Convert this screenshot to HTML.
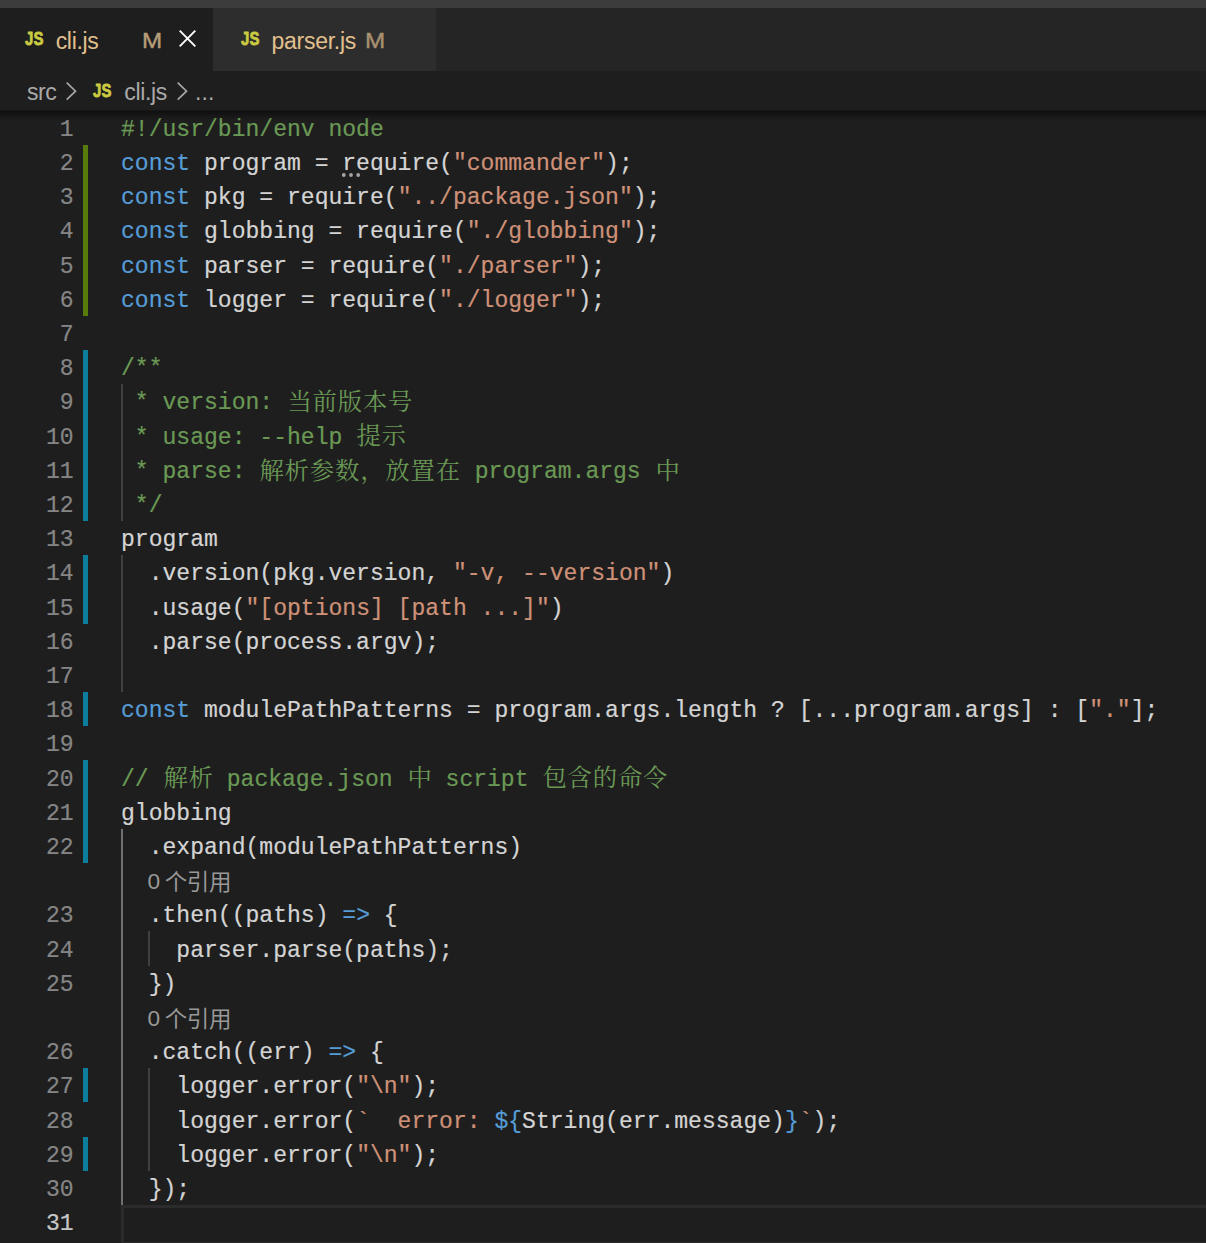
<!DOCTYPE html>
<html lang="zh"><head><meta charset="utf-8"><title>cli.js - Visual Studio Code</title>
<style>
*{box-sizing:border-box}
html,body{margin:0;padding:0}
html{overflow:hidden;background:#1e1e1e}
body{width:1206px;height:1243px;overflow:hidden;background:#1e1e1e;position:relative;
 font-family:"Liberation Sans",sans-serif;color:#d4d4d4}
#top{position:absolute;left:0;top:0;width:1206px;height:8px;background:#3c3c3c}
#tabs{position:absolute;left:0;top:8px;width:1206px;height:63px;background:#252526}
.tab{position:absolute;top:0;height:63px}
#t1{left:0;width:213.3px;background:#1e1e1e}
#t2{left:213.3px;width:222.7px;background:#2d2d2d}
.ui{position:absolute;white-space:pre;font-size:23px;line-height:26px;letter-spacing:-0.25px}
.m{font-size:22px;letter-spacing:0;-webkit-text-stroke:0.45px;transform-origin:0 50%;transform:scaleX(1.10)}
.mod{color:#e2c08d}
.bc{color:#a9a9a9}
.js{position:absolute}
#crumbs{position:absolute;left:0;top:71px;width:1206px;height:39.6px;background:#1e1e1e}
#shadow{position:absolute;left:0;top:110px;width:1206px;height:11px;
 background:linear-gradient(rgba(0,0,0,.1) 0,rgba(0,0,0,.46) 10%,rgba(0,0,0,.44) 19%,rgba(0,0,0,.3) 40%,rgba(0,0,0,.14) 68%,rgba(0,0,0,0) 100%);z-index:3}
#ed{position:absolute;left:0;top:0;width:1206px;height:1243px;overflow:hidden}
.ln{position:absolute;left:0;width:1206px;height:34.2px;line-height:34.2px;
 font-family:"Liberation Mono",monospace;font-size:23.05px;white-space:pre;-webkit-text-stroke:0.2px}
.no{position:absolute;right:1132.4px;top:2.2px;color:#858585}
.cur .no{color:#c6c6c6}
.code{position:absolute;left:121.0px;top:2.2px;height:34.2px}
.cur:before{content:"";position:absolute;left:121px;right:-4px;top:0.2px;height:33.8px;
 border:3.1px solid #2b2b2b}
.ga,.gm{position:absolute;left:83px;top:0;width:5.2px;height:34.2px}
.ga{background:#587c0c} .gm{background:#0c7d9d}
.gd{position:absolute;width:2px}
.cj{display:inline-block;position:relative;height:34.2px;vertical-align:top;top:-2.2px}
.cj svg{position:absolute;left:0;top:0;overflow:visible}
.cj text{-webkit-text-stroke:0;white-space:pre}
.cj .cm{font-family:"Liberation Mono","Noto Serif CJK SC",serif;font-size:24.44px;letter-spacing:0.76px}
.cj .cs{font-family:"Liberation Sans","Noto Sans CJK SC",sans-serif;font-size:22.5px;letter-spacing:-0.35px}
.lc{left:147.6px;top:0.85px;color:#999999;font-family:"Liberation Sans",sans-serif;font-size:22.7px;-webkit-text-stroke:0}
.lz{display:inline-block;width:17.2px}
.lc .cj{top:-0.85px}
</style></head>
<body>
<div id="top"></div>
<div id="tabs">
 <div class="tab" id="t1"><svg class="js" style="left:23.5px;top:22.0px" width="22" height="18" viewBox="-1 -2 22 18"><text transform="translate(0.1 13.45) scale(0.835 1)" font-family="Liberation Sans" font-weight="bold" font-size="17.9" fill="#cbcb41" stroke="#cbcb41" stroke-width="0.75" stroke-linejoin="round">JS</text></svg><span class="ui mod" style="left:55.7px;top:19.5px;letter-spacing:-0.33px">cli.js</span><span class="ui m" style="left:142.4px;top:19.8px;color:#b69d79">M</span><svg class="js" style="left:179.1px;top:22.0px" width="17" height="17" viewBox="0 0 17 17"><path d="M0.7 0.7 L16.3 16.3 M16.3 0.7 L0.7 16.3" fill="none" stroke="#ffffff" stroke-width="1.9"/></svg></div>
 <div class="tab" id="t2"><svg class="js" style="left:26.5px;top:22.0px" width="22" height="18" viewBox="-1 -2 22 18"><text transform="translate(0.1 13.45) scale(0.835 1)" font-family="Liberation Sans" font-weight="bold" font-size="17.9" fill="#cbcb41" stroke="#cbcb41" stroke-width="0.75" stroke-linejoin="round">JS</text></svg><span class="ui mod" style="left:58.1px;top:19.5px">parser.js</span><span class="ui m" style="left:151.9px;top:19.8px;color:#a8916f">M</span></div>
</div>
<div id="crumbs"><span class="ui bc" style="left:27px;top:7.9px;letter-spacing:-0.5px">src</span><svg class="js" style="left:65.9px;top:10.5px" width="12" height="19" viewBox="0 0 12 19"><path d="M0.7 0.7 L9.5 9.15 L0.7 17.6" fill="none" stroke="#a6a6a6" stroke-width="1.7"/></svg><svg class="js" style="left:92.0px;top:10.6px" width="22" height="18" viewBox="-1 -2 22 18"><text transform="translate(0.1 13.45) scale(0.835 1)" font-family="Liberation Sans" font-weight="bold" font-size="17.9" fill="#cbcb41" stroke="#cbcb41" stroke-width="0.75" stroke-linejoin="round">JS</text></svg><span class="ui bc" style="left:124.3px;top:7.9px;letter-spacing:-0.35px">cli.js</span><svg class="js" style="left:176.9px;top:10.5px" width="12" height="19" viewBox="0 0 12 19"><path d="M0.7 0.7 L9.5 9.15 L0.7 17.6" fill="none" stroke="#a6a6a6" stroke-width="1.7"/></svg><span class="ui bc" style="left:195px;top:7.9px;letter-spacing:0.1px">...</span></div>
<div id="ed">
<i class="gd" style="left:121px;top:384.20px;height:136.80px;background:#404040"></i><i class="gd" style="left:121px;top:555.20px;height:136.80px;background:#404040"></i><i class="gd" style="left:121px;top:828.80px;height:376.20px;background:#707070"></i><i class="gd" style="left:148px;top:931.40px;height:34.20px;background:#404040"></i><i class="gd" style="left:148px;top:1068.20px;height:102.60px;background:#404040"></i>
<div class="ln" style="top:110.60px"><span class="no">1</span><span class="code"><span style="color:#6a9955">#!/usr/bin/env node</span></span></div>
<div class="ln" style="top:144.80px"><b class="ga"></b><span class="no">2</span><span class="code"><span style="color:#569cd6">const</span> program = require(<span style="color:#ce9178">"commander"</span>);</span></div>
<div class="ln" style="top:179.00px"><b class="ga"></b><span class="no">3</span><span class="code"><span style="color:#569cd6">const</span> pkg = require(<span style="color:#ce9178">"../package.json"</span>);</span></div>
<div class="ln" style="top:213.20px"><b class="ga"></b><span class="no">4</span><span class="code"><span style="color:#569cd6">const</span> globbing = require(<span style="color:#ce9178">"./globbing"</span>);</span></div>
<div class="ln" style="top:247.40px"><b class="ga"></b><span class="no">5</span><span class="code"><span style="color:#569cd6">const</span> parser = require(<span style="color:#ce9178">"./parser"</span>);</span></div>
<div class="ln" style="top:281.60px"><b class="ga"></b><span class="no">6</span><span class="code"><span style="color:#569cd6">const</span> logger = require(<span style="color:#ce9178">"./logger"</span>);</span></div>
<div class="ln" style="top:315.80px"><span class="no">7</span><span class="code"></span></div>
<div class="ln" style="top:350.00px"><b class="gm"></b><span class="no">8</span><span class="code"><span style="color:#6a9955">/**</span></span></div>
<div class="ln" style="top:384.20px"><b class="gm"></b><span class="no">9</span><span class="code"><span style="color:#6a9955"> * version: </span><span class="cj" style="width:126.00px"><svg width="126.00" height="34.2" viewBox="0 -25.90 126.00 34.2" fill="#6a9955"><text class="cm" x="0.38" y="-0.29">当前版本号</text></svg></span></span></div>
<div class="ln" style="top:418.40px"><b class="gm"></b><span class="no">10</span><span class="code"><span style="color:#6a9955"> * usage: --help </span><span class="cj" style="width:50.40px"><svg width="50.40" height="34.2" viewBox="0 -25.90 50.40 34.2" fill="#6a9955"><text class="cm" x="0.38" y="-0.29">提示</text></svg></span></span></div>
<div class="ln" style="top:452.60px"><b class="gm"></b><span class="no">11</span><span class="code"><span style="color:#6a9955"> * parse: </span><span class="cj" style="width:201.60px"><svg width="201.60" height="34.2" viewBox="0 -25.90 201.60 34.2" fill="#6a9955"><text class="cm" x="0.38" y="-0.29">解析参数，放置在</text></svg></span><span style="color:#6a9955"> program.args </span><span class="cj" style="width:25.20px"><svg width="25.20" height="34.2" viewBox="0 -25.90 25.20 34.2" fill="#6a9955"><text class="cm" x="0.38" y="-0.29">中</text></svg></span></span></div>
<div class="ln" style="top:486.80px"><b class="gm"></b><span class="no">12</span><span class="code"><span style="color:#6a9955"> */</span></span></div>
<div class="ln" style="top:521.00px"><span class="no">13</span><span class="code">program</span></div>
<div class="ln" style="top:555.20px"><b class="gm"></b><span class="no">14</span><span class="code">  .version(pkg.version, <span style="color:#ce9178">"-v, --version"</span>)</span></div>
<div class="ln" style="top:589.40px"><b class="gm"></b><span class="no">15</span><span class="code">  .usage(<span style="color:#ce9178">"[options] [path ...]"</span>)</span></div>
<div class="ln" style="top:623.60px"><span class="no">16</span><span class="code">  .parse(process.argv);</span></div>
<div class="ln" style="top:657.80px"><span class="no">17</span><span class="code"></span></div>
<div class="ln" style="top:692.00px"><b class="gm"></b><span class="no">18</span><span class="code"><span style="color:#569cd6">const</span> modulePathPatterns = program.args.length ? [...program.args] : [<span style="color:#ce9178">"."</span>];</span></div>
<div class="ln" style="top:726.20px"><span class="no">19</span><span class="code"></span></div>
<div class="ln" style="top:760.40px"><b class="gm"></b><span class="no">20</span><span class="code"><span style="color:#6a9955">// </span><span class="cj" style="width:50.40px"><svg width="50.40" height="34.2" viewBox="0 -25.90 50.40 34.2" fill="#6a9955"><text class="cm" x="0.38" y="-0.29">解析</text></svg></span><span style="color:#6a9955"> package.json </span><span class="cj" style="width:25.20px"><svg width="25.20" height="34.2" viewBox="0 -25.90 25.20 34.2" fill="#6a9955"><text class="cm" x="0.38" y="-0.29">中</text></svg></span><span style="color:#6a9955"> script </span><span class="cj" style="width:126.00px"><svg width="126.00" height="34.2" viewBox="0 -25.90 126.00 34.2" fill="#6a9955"><text class="cm" x="0.38" y="-0.29">包含的命令</text></svg></span></span></div>
<div class="ln" style="top:794.60px"><b class="gm"></b><span class="no">21</span><span class="code">globbing</span></div>
<div class="ln" style="top:828.80px"><b class="gm"></b><span class="no">22</span><span class="code">  .expand(modulePathPatterns)</span></div>
<div class="ln lens" style="top:863.00px"><span class="code lc"><span class="lz">0</span><span class="cj" style="width:66.45px"><svg width="66.45" height="34.2" viewBox="0 -27.30 66.45 34.2" fill="#999999"><text class="cs" x="-0.30" y="0">个引用</text></svg></span></span></div>
<div class="ln" style="top:897.20px"><span class="no">23</span><span class="code">  .then((paths) <span style="color:#569cd6">=&gt;</span> {</span></div>
<div class="ln" style="top:931.40px"><span class="no">24</span><span class="code">    parser.parse(paths);</span></div>
<div class="ln" style="top:965.60px"><span class="no">25</span><span class="code">  })</span></div>
<div class="ln lens" style="top:999.80px"><span class="code lc"><span class="lz">0</span><span class="cj" style="width:66.45px"><svg width="66.45" height="34.2" viewBox="0 -27.30 66.45 34.2" fill="#999999"><text class="cs" x="-0.30" y="0">个引用</text></svg></span></span></div>
<div class="ln" style="top:1034.00px"><span class="no">26</span><span class="code">  .catch((err) <span style="color:#569cd6">=&gt;</span> {</span></div>
<div class="ln" style="top:1068.20px"><b class="gm"></b><span class="no">27</span><span class="code">    logger.error(<span style="color:#ce9178">"\n"</span>);</span></div>
<div class="ln" style="top:1102.40px"><span class="no">28</span><span class="code">    logger.error(<span style="color:#ce9178">`  error: </span><span style="color:#569cd6">${</span>String(err.message)<span style="color:#569cd6">}</span><span style="color:#ce9178">`</span>);</span></div>
<div class="ln" style="top:1136.60px"><b class="gm"></b><span class="no">29</span><span class="code">    logger.error(<span style="color:#ce9178">"\n"</span>);</span></div>
<div class="ln" style="top:1170.80px"><span class="no">30</span><span class="code">  });</span></div>
<div class="ln cur" style="top:1205.00px"><span class="no">31</span><span class="code"></span></div>
<svg class="js" style="left:340px;top:171px" width="24" height="8" viewBox="340 171 24 8"><g fill="#a4a4a4"><circle cx="343.8" cy="175" r="1.9"/><circle cx="351" cy="175" r="1.9"/><circle cx="358.2" cy="175" r="1.9"/></g></svg>
</div>
<div id="shadow"></div>
</body></html>
